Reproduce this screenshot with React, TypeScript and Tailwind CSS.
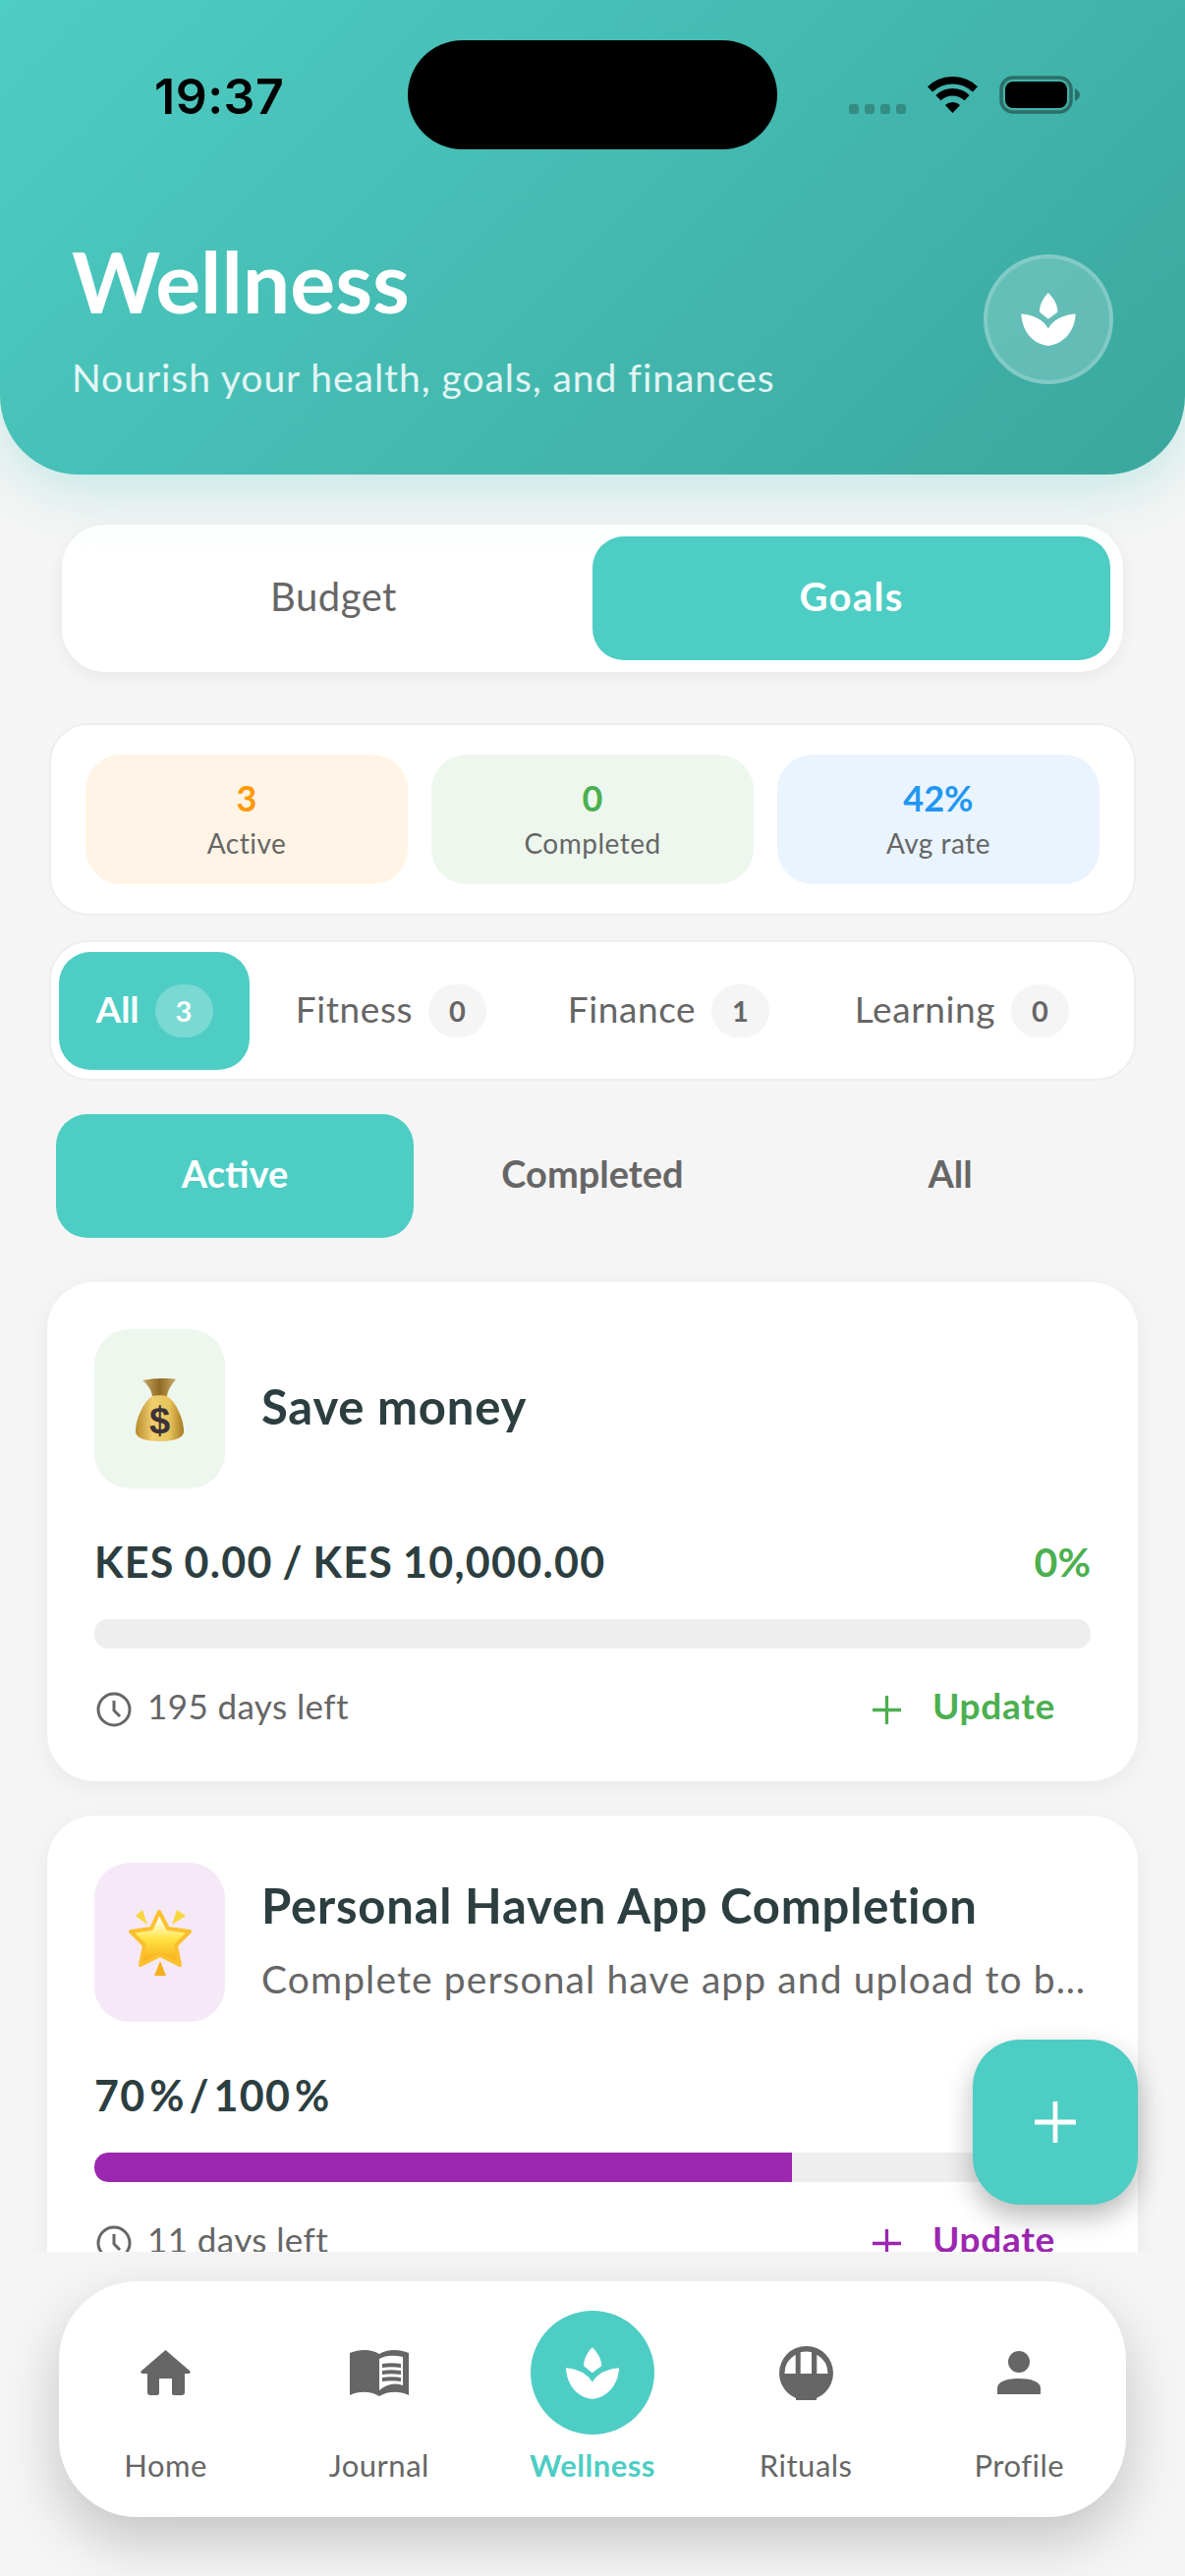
import { type ReactNode } from "react"

const FONT = "font-['Lato','Noto_Sans',sans-serif]"

function SpaIcon({ className }: { className: string }) {
  return (
    <svg viewBox="240 177 167 163" className={className} fill="currentColor">
      <path d="M323 177C310 190 296 210 296 236C305 244 314 250 323 258C332 250 342 244 352 236C352 210 336 190 323 177Z" />
      <path d="M240 242C280 245 310 262 323 287C336 262 366 245 407 242C405 295 370 335 323 340C276 335 242 295 240 242Z" />
    </svg>
  )
}

function HomeIcon() {
  return (
    <svg viewBox="0 0 51 46" className="w-[51px] h-[46px]" fill="#666666">
      <path d="M25.5 0L50.5 21.5Q51 24 49 24H45V43Q45 46 42 46H34Q32 46 32 44V29H19V44Q19 46 17 46H10Q7 46 7 43V24H2Q0 24 .5 21.5Z" />
    </svg>
  )
}

function JournalIcon() {
  return (
    <svg viewBox="0 0 60 47" className="w-[60px] h-[47px]">
      <path fill="#666666" d="M0 3C10-1 22-1 30 4C38-1 50-1 60 3V46C50 41 38 42 30 47C22 42 10 41 0 46Z" />
      <path fill="#ffffff" d="M30 9C37 5 45 5 54 7V36C45 33 37 35 30 41Z" />
      <path fill="#666666" d="M33 14C39 13 46 13 52 14V18C46 17 39 17 33 18ZM33 21C39 20 46 20 52 21V25C46 24 39 24 33 25ZM33 28C39 27 46 27 52 28V32C46 31 39 31 33 32Z" />
    </svg>
  )
}

function RitualsIcon() {
  return (
    <svg viewBox="0 0 55 55" className="w-[55px] h-[55px]">
      <circle cx="27.5" cy="27.5" r="27.5" fill="#666666" />
      <rect x="17" y="45" width="21" height="10" fill="#666666" />
      <path fill="#ffffff" d="M5.5 28A22 22 0 0 1 16.7 8.8V28ZM21.7 6.2A22 22 0 0 1 33 6.2V28H21.7ZM38.3 8.8A22 22 0 0 1 49.5 28H38.3Z" />
    </svg>
  )
}

function ProfileIcon() {
  return (
    <svg viewBox="0 0 44 44" className="w-[44px] h-[44px]" fill="#666666">
      <circle cx="22" cy="11" r="11" />
      <path d="M0 44V38C0 31 10 28 22 28C34 28 44 31 44 38V44Z" />
    </svg>
  )
}

function ClockIcon() {
  return (
    <svg viewBox="0 0 36 36" className="w-9 h-9 shrink-0" fill="none" stroke="#666666" strokeWidth="3">
      <circle cx="18" cy="18" r="16" />
      <path d="M18 9V19L24 25" />
    </svg>
  )
}

function PlusIcon({ className }: { className: string }) {
  return (
    <svg viewBox="0 0 30 30" className={className} fill="none" stroke="currentColor" strokeWidth="3.4">
      <path d="M15 0V30M0 15H30" />
    </svg>
  )
}

function WifiIcon() {
  return (
    <svg viewBox="0 0 51 37" className="w-[51px] h-[37px]" fill="none" stroke="#000000" strokeWidth="7.4">
      <path d="M2.5 12.9A33.3 33.3 0 0 1 48.5 12.9" />
      <path d="M10.9 21.65A21.2 21.2 0 0 1 40.1 21.65" />
      <path d="M25.5 37L17.9 29A11 11 0 0 1 33.1 29Z" fill="#000000" stroke="none" />
    </svg>
  )
}

function BatteryIcon() {
  return (
    <svg viewBox="0 0 82 39" className="w-[82px] h-[39px]">
      <rect x="2" y="2" width="71" height="35" rx="12" fill="none" stroke="#2c6f69" strokeWidth="3.5" />
      <rect x="6" y="6" width="63" height="27" rx="8" fill="#000000" />
      <path d="M77 13C80 15 82 17 82 19.5C82 22 80 24 77 26Z" fill="#2c6f69" />
    </svg>
  )
}

function MoneyBag() {
  return (
    <svg viewBox="0 0 49 65" className="w-[49px] h-[65px]">
      <defs>
        <linearGradient id="bagBody" x1="0" y1="0" x2="1" y2="0">
          <stop offset="0" stopColor="#b98a2c" />
          <stop offset="0.35" stopColor="#efcf6e" />
          <stop offset="0.7" stopColor="#e8c45c" />
          <stop offset="1" stopColor="#a87a22" />
        </linearGradient>
        <linearGradient id="bagTop" x1="0" y1="0" x2="1" y2="0">
          <stop offset="0" stopColor="#c9a868" />
          <stop offset="0.5" stopColor="#8f6a22" />
          <stop offset="1" stopColor="#c9a868" />
        </linearGradient>
      </defs>
      <path fill="url(#bagTop)" d="M7 3C15 1 33 0 41 2C37 7 33 12 32 19H17C16 12 12 7 7 3Z" />
      <path fill="url(#bagBody)" d="M17 19C20 18 29 18 32 19C41 25 49 42 49 55C49 62 38 65 24.5 65C11 65 0 62 0 55C0 42 8 25 17 19Z" />
      <text x="24.5" y="57" textAnchor="middle" fontFamily="Liberation Sans, sans-serif" fontWeight="700" fontSize="38" fill="#3c3238">$</text>
    </svg>
  )
}

function GlowingStar() {
  return (
    <svg viewBox="0 0 64 68" className="w-[64px] h-[68px]">
      <defs>
        <linearGradient id="starFill" x1="0" y1="0" x2="0" y2="1">
          <stop offset="0.15" stopColor="#fffdf0" />
          <stop offset="0.5" stopColor="#ffe545" />
          <stop offset="1" stopColor="#f5a30f" />
        </linearGradient>
      </defs>
      <path
        fill="url(#starFill)"
        stroke="#fbc02d"
        strokeWidth="4"
        strokeLinejoin="round"
        d="M31 3L40 20L62 23L48 37L52 57L32 47L12 57L16 37L2 23L23 20Z"
      />
      <path fill="#f9d63d" d="M7 7L14 1L19 16ZM58 7L49 1L44 16Z" />
      <path fill="#f7ae1b" d="M32 53L26 68H38Z" />
    </svg>
  )
}

function TabCount({ value, active }: { value: number; active?: boolean }) {
  return (
    <span
      className={`w-[59px] h-[54px] rounded-full flex items-center justify-center text-[29px] font-bold ${
        active ? "bg-white/25 text-white" : "bg-[#f5f5f5] text-[#666666]"
      }`}
    >
      {value}
    </span>
  )
}

function GoalCard({
  icon,
  tint,
  title,
  description,
  amount,
  amountSpacing,
  percent,
  progress,
  color,
  days,
}: {
  icon: ReactNode
  tint: string
  title: string
  description?: string
  amount: string
  amountSpacing: string
  percent: string
  progress: number
  color: string
  days: string
}) {
  return (
    <div className="shrink-0 h-[508px] rounded-[48px] bg-white px-[48px] pt-[48px] shadow-[0_6px_24px_rgba(0,0,0,0.05)]">
      <div className="flex items-center gap-[37px]">
        <div
          className="w-[133px] h-[162px] shrink-0 rounded-[36px] flex items-center justify-center"
          style={{ backgroundColor: tint }}
        >
          {icon}
        </div>
        <div className="min-w-0 flex-1">
          <h3 className={`text-[49px] leading-[62px] font-bold text-[#2c3e40] tracking-[0.8px] truncate ${description ? "" : "mb-[6px]"}`}>
            {title}
          </h3>
          {description && (
            <p className="mt-[19px] mb-[7px] text-[39px] leading-[50px] text-[#666666] tracking-[1.1px] truncate">
              {description}
            </p>
          )}
        </div>
      </div>
      <div className="mt-[48px] flex items-center justify-between">
        <span className={`text-[43px] leading-[54px] font-bold text-[#2c3e40] tracking-[1.3px] ${amountSpacing}`}>{amount}</span>
        <span className="text-[41px] leading-[54px] font-bold" style={{ color }}>
          {percent}
        </span>
      </div>
      <div className="mt-[31px] h-[30px] rounded-[14px] bg-[#eeeeee] overflow-hidden">
        <div className="h-full rounded-l-[14px]" style={{ width: `${progress}%`, backgroundColor: color }} />
      </div>
      <div className="mt-[40px] flex items-center justify-between pl-[2px] pr-[36px]">
        <span className="flex items-center gap-[16px] text-[35px] leading-[44px] text-[#666666] tracking-[0.4px]">
          <ClockIcon />
          <span className="-translate-y-[4px]">{days}</span>
        </span>
        <span className="flex items-center gap-[32px] text-[37px] leading-[44px] font-bold tracking-[0.7px]" style={{ color }}>
          <PlusIcon className="w-[29px] h-[29px]" />
          <span className="-translate-y-[4px]">Update</span>
        </span>
      </div>
    </div>
  )
}

const stats = [
  { value: "3", label: "Active", bg: "bg-[#fff4e5]", text: "text-[#ff9800]" },
  { value: "0", label: "Completed", bg: "bg-[#edf7ee]", text: "text-[#4caf50]" },
  { value: "42%", label: "Avg rate", bg: "bg-[#e9f4fe]", text: "text-[#2196f3]" },
]

const categories = [
  { name: "Fitness", count: 0, width: "w-[264px]" },
  { name: "Finance", count: 1, width: "w-[277px]" },
  { name: "Learning", count: 0, width: "w-[296px]" },
]

const navItems = [
  { label: "Home", icon: <HomeIcon /> },
  { label: "Journal", icon: <JournalIcon /> },
  { label: "Wellness", icon: null },
  { label: "Rituals", icon: <RitualsIcon /> },
  { label: "Profile", icon: <ProfileIcon /> },
]

export default function App() {
  return (
    <div className={`relative w-[1206px] h-[2622px] overflow-hidden bg-[#f5f5f5] ${FONT}`}>
      <div className="flex flex-col h-[2292px] overflow-hidden">
        {/* Gradient header with status bar */}
        <header className="relative z-10 shrink-0 h-[483px] rounded-b-[80px] bg-[linear-gradient(135deg,#4ecdc4,#3aa79e)] shadow-[0_16px_56px_rgba(78,205,196,0.3)] px-[73px]">
          <div className="absolute left-[415px] top-[41px] w-[376px] h-[111px] rounded-[56px] bg-black" />
          <div className="flex h-[158px] items-start justify-between pt-[68px] pl-[84px] pr-[34px]">
            <span className="font-['Inter'] text-[50px] leading-[60px] font-semibold text-black tracking-[0.5px]">19:37</span>
            <div className="flex items-start pt-[10px]">
              <div className="flex gap-[6px] mt-[28px] mr-[22px]">
                <span className="w-[10px] h-[10px] rounded-[3px] bg-[#2c6f69]/60" />
                <span className="w-[10px] h-[10px] rounded-[3px] bg-[#2c6f69]/60" />
                <span className="w-[10px] h-[10px] rounded-[3px] bg-[#2c6f69]/60" />
                <span className="w-[10px] h-[10px] rounded-[3px] bg-[#2c6f69]/60" />
              </div>
              <WifiIcon />
              <div className="ml-[22px] -mt-px">
                <BatteryIcon />
              </div>
            </div>
          </div>
          <div className="flex items-start justify-between pt-[100px]">
            <div className="-mt-[17px]">
              <h1 className="text-[86px] leading-[90px] font-bold text-white">Wellness</h1>
              <p className="mt-[28px] text-[39px] leading-[50px] text-white/85 tracking-[0.95px]">
                Nourish your health, goals, and finances
              </p>
            </div>
            <div className="mt-px w-[132px] h-[132px] rounded-full border-[4px] border-white/20 bg-white/20 flex items-center justify-center text-white">
              <SpaIcon className="w-[56px] h-[54px]" />
            </div>
          </div>
        </header>

        <main className="flex-1 min-h-0 flex flex-col px-[48px]">
          {/* Budget / Goals switch */}
          <div className="shrink-0 mt-[51px] mx-[15px] h-[150px] rounded-[44px] bg-white py-[12px] px-[13px] flex shadow-[0_4px_16px_rgba(0,0,0,0.06)]">
            <div className="flex-1 flex items-center justify-center pb-[4px] text-[40px] text-[#666666] tracking-[0.5px]">Budget</div>
            <div className="flex-1 flex items-center justify-center pb-[4px] rounded-[32px] bg-[#4ecdc4] text-[40px] font-bold text-white tracking-[1.3px]">
              Goals
            </div>
          </div>

          {/* Stats row */}
          <div className="shrink-0 mt-[52px] mx-[2px] h-[196px] rounded-[40px] border-2 border-[#eeeeee] bg-white px-[35px] pt-[30px] flex gap-[24px]">
            {stats.map((stat) => (
              <div key={stat.label} className={`flex-1 h-[132px] rounded-[36px] ${stat.bg} flex flex-col items-center pt-[22px]`}>
                <span className={`text-[36px] leading-[44px] font-bold ${stat.text}`}>{stat.value}</span>
                <span className="mt-[6px] text-[28px] leading-[36px] text-[#666666] tracking-[0.5px]">{stat.label}</span>
              </div>
            ))}
          </div>

          {/* Category filter */}
          <div className="shrink-0 mt-[25px] mx-[2px] h-[143px] rounded-[40px] border-2 border-[#eeeeee] bg-white px-[8px] flex items-center gap-[12px]">
            <div className="w-[194px] h-[120px] rounded-[32px] bg-[#4ecdc4] flex items-center justify-center gap-[16px] text-[37px] font-bold text-white">
              <span className="mb-[3px]">All</span>
              <TabCount value={3} active />
            </div>
            {categories.map((item) => (
              <div key={item.name} className={`${item.width} h-[120px] flex items-center justify-center gap-[16px] text-[37px] text-[#666666] tracking-[0.6px]`}>
                <span className="mb-[3px]">{item.name}</span>
                <TabCount value={item.count} />
              </div>
            ))}
          </div>

          {/* Status switch */}
          <div className="shrink-0 mt-[34px] mx-[9px] h-[126px] grid grid-cols-3 text-[38px] font-bold text-[#666666]">
            <div className="rounded-[32px] bg-[#4ecdc4] flex items-center justify-center pb-[5px] text-white">Active</div>
            <div className="flex items-center justify-center pb-[5px]">Completed</div>
            <div className="flex items-center justify-center pb-[5px]">All</div>
          </div>

          <div className="flex flex-col gap-[35px] mt-[45px]">
            <GoalCard
              icon={<MoneyBag />}
              tint="#edf7ee"
              title="Save money"
              amount="KES 0.00 / KES 10,000.00"
              amountSpacing="[word-spacing:-2px]"
              percent="0%"
              progress={0}
              color="#4caf50"
              days="195 days left"
            />
            <GoalCard
              icon={<GlowingStar />}
              tint="#f5e9f7"
              title="Personal Haven App Completion"
              description="Complete personal have app and upload to beta testers"
              amount="70 % / 100 %"
              amountSpacing="[word-spacing:-8px]"
              percent="70%"
              progress={70}
              color="#9c27b0"
              days="11 days left"
            />
          </div>
        </main>
      </div>

      {/* Floating add button */}
      <button className="absolute left-[990px] top-[2076px] w-[168px] h-[168px] rounded-[48px] bg-[#4ecdc4] text-white flex items-center justify-center shadow-[0_12px_28px_rgba(0,0,0,0.28)]">
        <PlusIcon className="w-[42px] h-[42px]" />
      </button>

      {/* Floating tab bar */}
      <nav className="absolute left-[60px] top-[2322px] w-[1086px] h-[240px] rounded-[80px] bg-white grid grid-cols-5 shadow-[0_24px_56px_rgba(0,0,0,0.2)]">
        {navItems.map((item) => (
          <div key={item.label} className="flex flex-col items-center pt-[30px]">
            <div className="h-[126px] flex items-center justify-center">
              {item.icon ?? (
                <div className="w-[126px] h-[126px] rounded-full bg-[#4ecdc4] flex items-center justify-center text-white">
                  <SpaIcon className="w-[54px] h-[55px]" />
                </div>
              )}
            </div>
            <span
              className={`mt-[11px] text-[31px] leading-[40px] tracking-[0.5px] ${
                item.icon ? "text-[#666666]" : "font-bold text-[#4ecdc4]"
              }`}
            >
              {item.label}
            </span>
          </div>
        ))}
      </nav>
    </div>
  )
}
